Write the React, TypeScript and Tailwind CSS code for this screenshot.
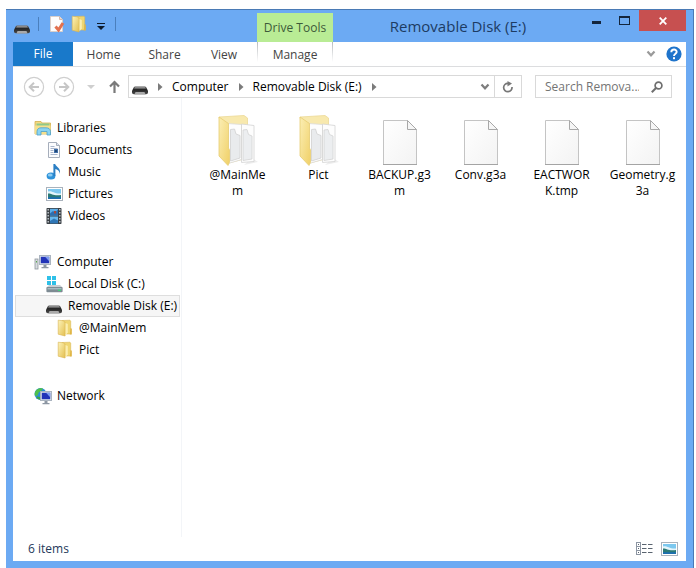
import type { ReactNode } from "react";

type IconProps = { className?: string };

const DriveIcon: React.FC<IconProps> = ({ className }) => (
  <svg viewBox="0 0 16 16" className={className ?? "w-4 h-4"} aria-hidden>
    <defs>
      <linearGradient id="driveBody" x1="0" y1="0" x2="0" y2="1">
        <stop offset="0" stopColor="#6a6a6a" />
        <stop offset="0.4" stopColor="#242424" />
        <stop offset="1" stopColor="#4c4c4c" />
      </linearGradient>
    </defs>
    <path d="M3.200 7.500h9.600q1.200 0 1.700 1.200L16 12v1.500q0 1.800-1.800 1.800H1.800Q0 15.300 0 13.500V12l1.500-3.300q.5-1.200 1.700-1.200z" fill="url(#driveBody)" />
    <path d="M3.200 7.800h9.600l1 1.800H2.200z" fill="#8b8b8b" />
    <path d="M3.500 13h9l1 2.600h-11z" fill="#a9a9a9" />
  </svg>
);

const PropertiesIcon: React.FC = () => (
  <svg viewBox="0 0 16 18" className="w-4 h-[18px]" aria-hidden>
    <path d="M1.500 1.500h9l3 3v12h-12z" fill="#fdfdfd" stroke="#d9cfca" />
    <path d="M10.500 1.500v3h3" fill="#f3d9cc" stroke="#d3b8ab" />
    <path
      d="M6.500 11.500l3 3.500 4.500-7"
      fill="none"
      stroke="#e2714f"
      strokeWidth="3"
    />
  </svg>
);

const FolderIcon: React.FC<IconProps> = ({ className }) => (
  <svg viewBox="0 0 16 18" className={className ?? "w-4 h-[18px]"} aria-hidden>
    <defs>
      <linearGradient id="folderFront" x1="0" y1="0" x2="1" y2="1">
        <stop offset="0" stopColor="#fdf3b8" />
        <stop offset="1" stopColor="#e3bf50" />
      </linearGradient>
    </defs>
    <path d="M5 1.500l8-.3.700 1V15H6z" fill="#efd672" stroke="#dcb955" strokeWidth=".6" />
    <path d="M13.500 9l1.300.8v5.700h-2z" fill="#dfb545" />
    <path d="M1.200 1.200l5.500.6 1.400 2v13.200l-6.900-1.800z" fill="url(#folderFront)" stroke="#d8b450" strokeWidth=".6" />
    <path d="M8.500 4l2.300 1v8.500l-2.300 2.700z" fill="#fbeeb0" />
  </svg>
);

const LibrariesIcon: React.FC = () => (
  <svg viewBox="0 0 18 16" className="w-[18px] h-4" aria-hidden>
    <path d="M1 1.500h6l1 1.500h8.500V14H1z" fill="#f3d984" stroke="#d3b04c" strokeWidth=".8" />
    <path d="M2.500 3.500h13V6h-13z" fill="#8fc98a" />
    <path d="M1 5.500h15.500V14H1z" fill="#f6e08c" />
    <path
      d="M3 15V11.500C3 9 4.800 7.800 7 7.800h5c2.500 0 4.500 1.200 4.500 3.700V15h-3.500v-3.500h-6V15z"
      fill="#8ad4f2"
      stroke="#4b9fcb"
      strokeWidth=".8"
    />
  </svg>
);

const DocumentIcon: React.FC = () => (
  <svg viewBox="0 0 16 16" className="w-4 h-4" aria-hidden>
    <path d="M2.500.5h8l3 3v12h-11z" fill="#fbfcfe" stroke="#a6aebb" />
    <path d="M10.500.5v3h3" fill="#dde3ee" stroke="#a6aebb" />
    <path d="M4.500 4.500h4M4.500 6.500h7M4.500 8.500h3M4.500 10.500h3M4.500 12.500h7" stroke="#a9b6cc" />
    <rect x="8" y="7" width="4" height="4" fill="#3f6ea8" />
    <rect x="9" y="8" width="2" height="2" fill="#1f4675" />
  </svg>
);

const MusicIcon: React.FC = () => (
  <svg viewBox="0 0 16 16" className="w-4 h-4" aria-hidden>
    <ellipse cx="5" cy="12" rx="4.400" ry="3.600" fill="#2f93da" />
    <ellipse cx="4.200" cy="10.900" rx="2.400" ry="1.500" fill="#8ccbf2" />
    <path
      d="M7.400 12V0h1.800c.3 2.700 6.300 3.900 4.600 10-.1-2.500-1.600-4.500-4.400-5v7z"
      fill="#2b7fc4"
    />
  </svg>
);

const PicturesIcon: React.FC = () => (
  <svg viewBox="0 0 17 14" className="w-[17px] h-[14px]" aria-hidden>
    <rect x=".5" y=".5" width="16" height="13" fill="#fff" stroke="#a9b2bc" />
    <rect x="2" y="2" width="13" height="10" fill="#7cc8ef" />
    <path d="M2 4.500c4-1 6 2.500 13 2V9H2z" fill="#e4f5fb" />
    <path d="M2 6.500c3-.5 5 2.700 13 1.500v3H2z" fill="#2b7a76" />
    <path d="M2 10.200h13V12H2z" fill="#1c6fb0" />
  </svg>
);

const VideosIcon: React.FC = () => (
  <svg viewBox="0 0 16 16" className="w-4 h-4" aria-hidden>
    <rect x=".5" width="15" height="16" rx=".8" fill="#3b4146" />
    <path
      d="M2.200 1v14M13.800 1v14"
      stroke="#c3c9cf"
      strokeWidth="1.400"
      strokeDasharray="1.600 1.400"
    />
    <rect x="4" y=".8" width="8" height="6.700" fill="#5eaee6" />
    <rect x="4" y="8.500" width="8" height="6.700" fill="#67b8ee" />
    <path d="M4 5.500l3-2.500 2 1.500 3-3v6H4z" fill="#2c6fb0" />
    <path d="M8 3h2v2.500H8z" fill="#a6473a" />
    <path d="M4 13l4-2.500 4 2v2.700H4z" fill="#2f76b6" />
  </svg>
);

const Monitor: React.FC = () => (
  <g>
    <rect x="5.500" y="1.500" width="11" height="9" fill="#d9e0e8" stroke="#aab4c0" />
    <rect x="6.800" y="2.800" width="8.400" height="6.400" fill="#2334b8" />
    <path d="M11 2.800h4.200v4.400z" fill="#7d9cf0" />
    <path d="M9.500 11h3v2h2v1.300h-7V13h2z" fill="#8d97a3" />
  </g>
);

const ComputerIcon: React.FC = () => (
  <svg viewBox="0 0 18 16" className="w-[18px] h-4" aria-hidden>
    <Monitor />
    <rect x="1" y="5" width="3" height="10" fill="#d8dce0" stroke="#8f979f" strokeWidth=".8" />
    <path d="M2.500 7v1.500" stroke="#58a84c" />
  </svg>
);

const NetworkIcon: React.FC = () => (
  <svg viewBox="0 0 18 18" className="w-[18px] h-[18px]" aria-hidden>
    <circle cx="6.500" cy="7" r="6" fill="#2b8ed8" />
    <path d="M2 3.500c2-2.500 5-2.500 7-2L7 4.500 5 5 3.500 8.500 1 9c-.7-2.500-.2-4 1-5.500z" fill="#4fc04b" />
    <path d="M3 9.500l4 .5v2.500c-2 .2-3.500-.5-4.500-1.500z" fill="#3aa540" />
    <g transform="translate(1 3)">
      <Monitor />
    </g>
  </svg>
);

const LocalDiskIcon: React.FC = () => (
  <svg viewBox="0 0 17 17" className="w-[17px] h-[17px]" aria-hidden>
    <path d="M3 9h11l2.500 2.500H.5z" fill="#c8ced3" />
    <rect x=".4" y="11" width="16.200" height="5.300" rx="1" fill="#7e8b93" />
    <rect x="1.500" y="12" width="14" height="1.400" fill="#a7bcc2" />
    <rect x="12" y="13.600" width="3" height="1.400" fill="#42d27c" />
    <path d="M1 0h4v4H1zM6 0h4v4H6zM1 5h4v4H1zM6 5h4v4H6z" fill="#2fc0e8" />
  </svg>
);

const LargeFolder: React.FC = () => (
  <svg viewBox="0 0 40 53" className="w-10 h-[53px]" aria-hidden>
    <defs>
      <linearGradient id="largeFront" x1="0" y1="0" x2="1" y2="1">
        <stop offset="0" stopColor="#fbeeb4" />
        <stop offset="1" stopColor="#f0d067" />
      </linearGradient>
    </defs>
    <path d="M34 44l6 4-14 3z" fill="#eeeeee" />
    <path d="M1 3L26 1.500l3.500 2.500v40L11 49z" fill="#f8e9ae" stroke="#ecd997" strokeWidth=".8" />
    <path d="M9.500 9.500l14 1v35l-13.500 4z" fill="#fdfdfd" stroke="#dadada" strokeWidth=".8" />
    <path d="M12.500 15.500l4-.5 1.500 5 4 1.500V44l-9.500 3z" fill="#e9ebed" stroke="#d0d0d0" strokeWidth=".8" />
    <path d="M23.500 10l12.500 1.500v36l-12.500 1z" fill="#fdfdfd" stroke="#d3d3d3" strokeWidth=".8" />
    <path d="M25 16l4-.5 1.500 5 3.500 1.500v23l-9 1.500z" fill="#eceef0" stroke="#d3d3d3" strokeWidth=".8" />
    <path d="M1 3l9.500 6.500V34l1 2v12l-1.500 3.500L1 42z" fill="url(#largeFront)" stroke="#e7cd72" strokeWidth=".8" />
  </svg>
);

const BlankFile: React.FC = () => (
  <svg viewBox="0 0 40 53" className="w-10 h-[53px]" aria-hidden>
    <defs>
      <linearGradient id="paper" x1="0" y1="0" x2="1" y2="1">
        <stop offset="0" stopColor="#ffffff" />
        <stop offset="1" stopColor="#f3f3f3" />
      </linearGradient>
    </defs>
    <path d="M3.500 6.500h24l9 9v35h-33z" fill="url(#paper)" stroke="#c4c4c4" />
    <path d="M27.500 6.500v9h9z" fill="#f6f6f6" stroke="#a8a8a8" />
    <path d="M3 50.500h34" stroke="#a4a4a4" />
  </svg>
);

const RoundArrow: React.FC<{ flip?: boolean }> = ({ flip }) => (
  <svg viewBox="0 0 22 22" className="w-[22px] h-[22px]" aria-hidden>
    <circle cx="11" cy="11" r="9.600" fill="#fff" stroke="#cfcfcf" strokeWidth="1.200" />
    <path
      d={flip ? "M6 11h9M11 6.800l4.300 4.200-4.300 4.200" : "M16 11H7M11 6.800L6.700 11l4.300 4.200"}
      fill="none"
      stroke="#c6c6c6"
      strokeWidth="2"
    />
  </svg>
);

const Crumb: React.FC = () => (
  <svg viewBox="0 0 6 8" className="w-[6px] h-2 shrink-0" aria-hidden>
    <path d="M1 0l4.500 4L1 8z" fill="#7b7b7b" />
  </svg>
);

const Chevron: React.FC<{ color: string }> = ({ color }) => (
  <svg viewBox="0 0 10 8" className="w-[10px] h-2" aria-hidden>
    <path d="M1.500 1.500L5 5.300l3.500-3.800" fill="none" stroke={color} strokeWidth="2.200" />
  </svg>
);

const TreeItem: React.FC<{
  label: string;
  icon: ReactNode;
  level?: 0 | 1 | 2;
  selected?: boolean;
}> = ({ label, icon, level = 0, selected }) => {
  const indent = ["pl-[18px]", "pl-[29px]", "pl-[40px]"][level];

  return (
    <li>
      <button
        className={`flex h-[22px] w-full items-center gap-[5px] border whitespace-nowrap ${indent} ${
          selected ? "border-[#dedede] bg-[#f6f6f6]" : "border-transparent"
        }`}
      >
        <span className="flex w-[18px] shrink-0 justify-center">{icon}</span>
        {label}
      </button>
    </li>
  );
};

const files = [
  { name: "@MainMe\nm", folder: true },
  { name: "Pict", folder: true },
  { name: "BACKUP.g3\nm", folder: false },
  { name: "Conv.g3a", folder: false },
  { name: "EACTWOR\nK.tmp", folder: false },
  { name: "Geometry.g\n3a", folder: false },
];

const TitleBar: React.FC = () => (
  <header className="flex h-8 shrink-0">
    <div className="flex w-[244px] shrink-0 items-center pb-1">
      <button aria-label="System menu" className="mr-2 ml-px">
        <DriveIcon className="mt-1 h-4 w-4" />
      </button>
      <span className="h-[14px] w-px bg-[#4a7fbd]" />
      <button aria-label="Properties" className="ml-[10px]">
        <PropertiesIcon />
      </button>
      <button aria-label="New folder" className="ml-[6px]">
        <FolderIcon />
      </button>
      <button aria-label="Customize toolbar" className="ml-[10px] pt-1">
        <svg viewBox="0 0 8 7" className="w-2 h-[7px]" aria-hidden>
          <path d="M0 3h8L4 7z" fill="#0d1b2c" />
          <path d="M0 .5h8" stroke="#0d1b2c" />
        </svg>
      </button>
      <span className="ml-[10px] h-[14px] w-px bg-[#4a7fbd]" />
    </div>
    <div className="mt-[3px] flex w-[76px] shrink-0 items-center justify-center bg-[#b9ec95] text-[#3d5a3a]">
      Drive Tools
    </div>
    <h1 className="flex-1 text-center text-[15px] leading-8 text-[#1d3c63]">
      Removable Disk (E:)
    </h1>
    <div className="flex h-[21px] shrink-0">
      <button aria-label="Minimize" className="flex w-[27px] items-center justify-center pt-1">
        <span className="h-[3px] w-[9px] bg-[#14263d]" />
      </button>
      <button aria-label="Maximize" className="flex w-[29px] items-center justify-center">
        <span className="h-[9px] w-[11px] border border-t-2 border-[#14263d]" />
      </button>
      <button aria-label="Close" className="flex w-[47px] items-center justify-center bg-[#c75050]">
        <svg viewBox="0 0 8 8" className="w-2 h-2" aria-hidden>
          <path d="M.7.7l6.600 6.600M7.300.7L.7 7.300" stroke="#fff" strokeWidth="1.800" />
        </svg>
      </button>
    </div>
  </header>
);

const RibbonTabs: React.FC = () => (
  <nav className="flex h-[25px] shrink-0 border-b border-[#dcdddf] text-[#444]">
    <button className="w-[60px] shrink-0 bg-[#1979ca] text-white">File</button>
    <button className="w-[61px] pt-[2px]">Home</button>
    <button className="w-[61px] pt-[2px]">Share</button>
    <button className="w-[58px] pt-[2px]">View</button>
    <div className="ml-1 flex w-[76px]">
      <span className="h-5 w-px bg-linear-to-b from-[#b8bbbe] to-white" />
      <button className="flex-1 pt-[2px]">Manage</button>
      <span className="h-5 w-px bg-linear-to-b from-[#b8bbbe] to-white" />
    </div>
    <div className="ml-auto flex items-center gap-[10px] pr-1">
      <button aria-label="Expand the ribbon">
        <Chevron color="#9a9a9a" />
      </button>
      <button aria-label="Help">
        <svg viewBox="0 0 16 16" className="w-4 h-4" aria-hidden>
          <circle cx="8" cy="8" r="7.600" fill="#1f74cb" />
          <path
            d="M5.300 6.300c0-3.700 5.600-3.500 5.400-.4C10.600 7.700 8 7.700 8 10"
            fill="none"
            stroke="#fff"
            strokeWidth="1.900"
          />
          <rect x="7" y="11.200" width="2" height="2" fill="#fff" />
        </svg>
      </button>
    </div>
  </nav>
);

const AddressBar: React.FC = () => (
  <div className="flex shrink-0 items-center px-[10px] pt-2 pr-[14px]">
    <button aria-label="Back">
      <RoundArrow />
    </button>
    <button aria-label="Forward" className="ml-2">
      <RoundArrow flip />
    </button>
    <button aria-label="Recent locations" className="ml-3">
      <svg viewBox="0 0 8 4" className="w-2 h-1" aria-hidden>
        <path d="M0 0h8L4 4z" fill="#cfcfcf" />
      </svg>
    </button>
    <button aria-label="Up" className="ml-[14px]">
      <svg viewBox="0 0 11 13" className="w-[11px] h-[13px]" aria-hidden>
        <path d="M5.500 13V2M1 6.500L5.500 2 10 6.500" fill="none" stroke="#7a7a7a" strokeWidth="2.200" />
      </svg>
    </button>
    <div className="ml-2 flex h-[23px] flex-1 items-center border border-[#d9d9d9] whitespace-nowrap">
      <span className="ml-[3px]">
        <DriveIcon />
      </span>
      <span className="ml-[9px]">
        <Crumb />
      </span>
      <button className="ml-[9px]">Computer</button>
      <span className="ml-[9px]">
        <Crumb />
      </span>
      <button className="ml-[9px]">Removable Disk (E:)</button>
      <span className="ml-[9px]">
        <Crumb />
      </span>
      <button aria-label="Previous locations" className="mr-1 ml-auto">
        <Chevron color="#7d7d7d" />
      </button>
      <button
        aria-label="Refresh"
        className="flex h-full w-[27px] items-center justify-center border-l border-[#d9d9d9]"
      >
        <svg viewBox="0 0 12 12" className="w-3 h-3" aria-hidden>
          <path d="M10 6a4.200 4.200 0 1 1-4-3.700" fill="none" stroke="#777" strokeWidth="1.700" />
          <path d="M5.500 0l4.500 2.500L5.500 5.500z" fill="#777" />
        </svg>
      </button>
    </div>
    <label className="ml-[13px] flex h-[23px] w-[137px] shrink-0 items-center border border-[#d9d9d9] pr-2 pl-[9px]">
      <input
        type="search"
        aria-label="Search Removable Disk (E:)"
        placeholder="Search Remova..."
        className="min-w-0 flex-1 outline-none placeholder:text-[#747474]"
      />
      <svg viewBox="0 0 12 12" className="w-3 h-3 shrink-0" aria-hidden>
        <circle cx="7.500" cy="4.500" r="3.400" fill="none" stroke="#6f6f6f" strokeWidth="1.700" />
        <path d="M5 7L.8 11.200" stroke="#6f6f6f" strokeWidth="2" />
      </svg>
    </label>
  </div>
);

const NavigationTree: React.FC = () => (
  <nav className="flex w-[169px] shrink-0 flex-col gap-6 border-r border-[#f3f5f8] pt-[19px] pr-px pl-[2px]">
    <ul>
      <TreeItem label="Libraries" icon={<LibrariesIcon />} />
      <TreeItem level={1} label="Documents" icon={<DocumentIcon />} />
      <TreeItem level={1} label="Music" icon={<MusicIcon />} />
      <TreeItem level={1} label="Pictures" icon={<PicturesIcon />} />
      <TreeItem level={1} label="Videos" icon={<VideosIcon />} />
    </ul>
    <ul>
      <TreeItem label="Computer" icon={<ComputerIcon />} />
      <TreeItem level={1} label="Local Disk (C:)" icon={<LocalDiskIcon />} />
      <TreeItem level={1} label="Removable Disk (E:)" icon={<DriveIcon />} selected />
      <TreeItem level={2} label="@MainMem" icon={<FolderIcon />} />
      <TreeItem level={2} label="Pict" icon={<FolderIcon />} />
    </ul>
    <ul>
      <TreeItem label="Network" icon={<NetworkIcon />} />
    </ul>
  </nav>
);

const StatusBar: React.FC = () => (
  <footer className="flex h-6 shrink-0 items-center pr-2 pl-[15px] text-[#1e395b]">
    <span>6 items</span>
    <button aria-label="Details view" className="ml-auto">
      <svg viewBox="0 0 17 14" className="w-[17px] h-[14px]" aria-hidden>
        {[0, 4, 8].map((y) => (
          <g key={y}>
            <rect x=".5" y={y + 0.5} width="4" height="4" fill="#fff" stroke="#8d96a3" />
            <path d={`M2 ${y + 2.5}h1M6 ${y + 2.5}h4.500M12 ${y + 2.5}h4.500`} stroke="#59636f" />
          </g>
        ))}
      </svg>
    </button>
    <button aria-label="Large icons view" className="ml-2">
      <PicturesIcon />
    </button>
  </footer>
);

const App: React.FC = () => (
  <div className="flex h-screen flex-col bg-white pt-[9px] pr-[2px] pl-[6px] font-['Open_Sans',sans-serif] text-xs text-black">
    <div className="flex min-h-0 flex-1 flex-col border-t border-r border-[#4a7ab5] bg-[#6caaf3] pr-[7px] pb-[7px] pl-[7px]">
      <TitleBar />
      <div className="flex min-h-0 flex-1 flex-col bg-white">
        <RibbonTabs />
        <AddressBar />
        <main className="flex min-h-0 flex-1">
          <NavigationTree />
          <ul className="flex flex-1 flex-wrap content-start pt-4 pl-[15px]">
            {files.map(({ name, folder }) => (
              <li key={name} className="flex w-[81px] flex-col items-center">
                {folder ? <LargeFolder /> : <BlankFile />}
                <span className="text-center leading-4 whitespace-pre">{name}</span>
              </li>
            ))}
          </ul>
        </main>
        <StatusBar />
      </div>
    </div>
  </div>
);

export default App;
